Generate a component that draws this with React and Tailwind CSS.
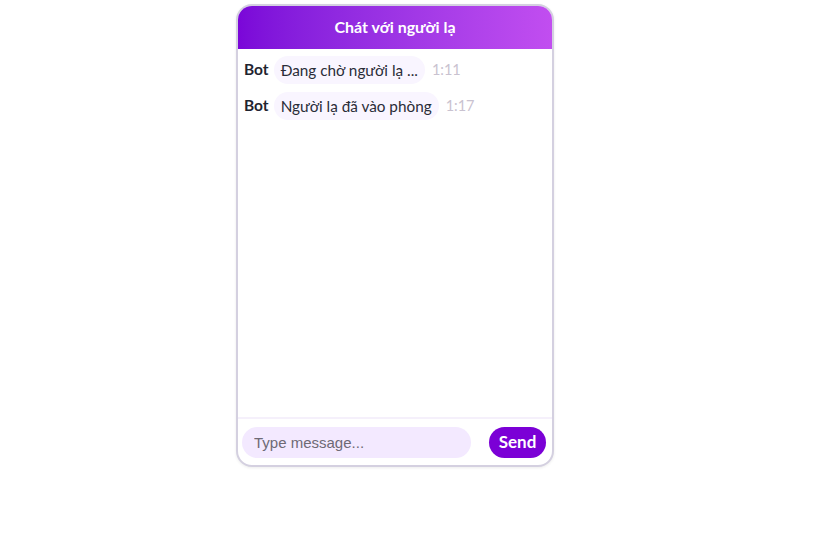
import { useState } from "react";

const messages = [
  { from: "Bot", text: "Đang chờ người lạ ...", time: "1:11" },
  { from: "Bot", text: "Người lạ đã vào phòng", time: "1:17" },
];

export default function App() {
  const [draft, setDraft] = useState("");

  return (
    <div className="min-h-screen bg-white pt-[4px] pl-[236px] font-['Lato','Noto_Sans',sans-serif]">
      <div className="flex h-[463px] w-[318px] flex-col overflow-hidden rounded-[16px] border-2 border-[#d4d0e0] bg-white shadow-[0_1px_3px_rgba(0,0,0,0.08)]">
        <header className="-mx-[2px] -mt-[2px] flex h-[45px] shrink-0 items-center justify-center bg-gradient-to-r from-[#7a05d8] to-[#c24ef0] text-[16px] font-bold text-white">
          Chát với người lạ
        </header>

        <div className="flex-1 space-y-[8px] px-[6px] pt-[7px]">
          {messages.map((m, i) => (
            <div key={i} className="flex items-center gap-[5px]">
              <span className="text-[15.5px] font-bold text-[#1f2430]">{m.from}</span>
              <span className="rounded-full bg-[#f9f5ff] px-[7px] py-[2px] text-[15.3px] leading-[24px] text-[#2a2d38]">
                {m.text}
              </span>
              <span className="ml-[2px] text-[14.5px] text-[#c9c2d0]">{m.time}</span>
            </div>
          ))}
        </div>

        <div className="flex h-[48px] shrink-0 items-center gap-[18px] border-t-2 border-[#f5f0fb] px-[4px]">
          <input
            value={draft}
            onChange={(e) => setDraft(e.target.value)}
            placeholder="Type message..."
            className="h-[31px] w-[229px] rounded-full bg-[#f3e9ff] px-[12px] font-['Liberation_Sans',Arial,sans-serif] text-[15px] text-[#333] outline-none placeholder:text-[#6e6a75]"
          />
          <button className="h-[31px] w-[57px] rounded-full bg-[#7b00d6] text-[17px] font-bold text-white">
            Send
          </button>
        </div>
      </div>
    </div>
  );
}
